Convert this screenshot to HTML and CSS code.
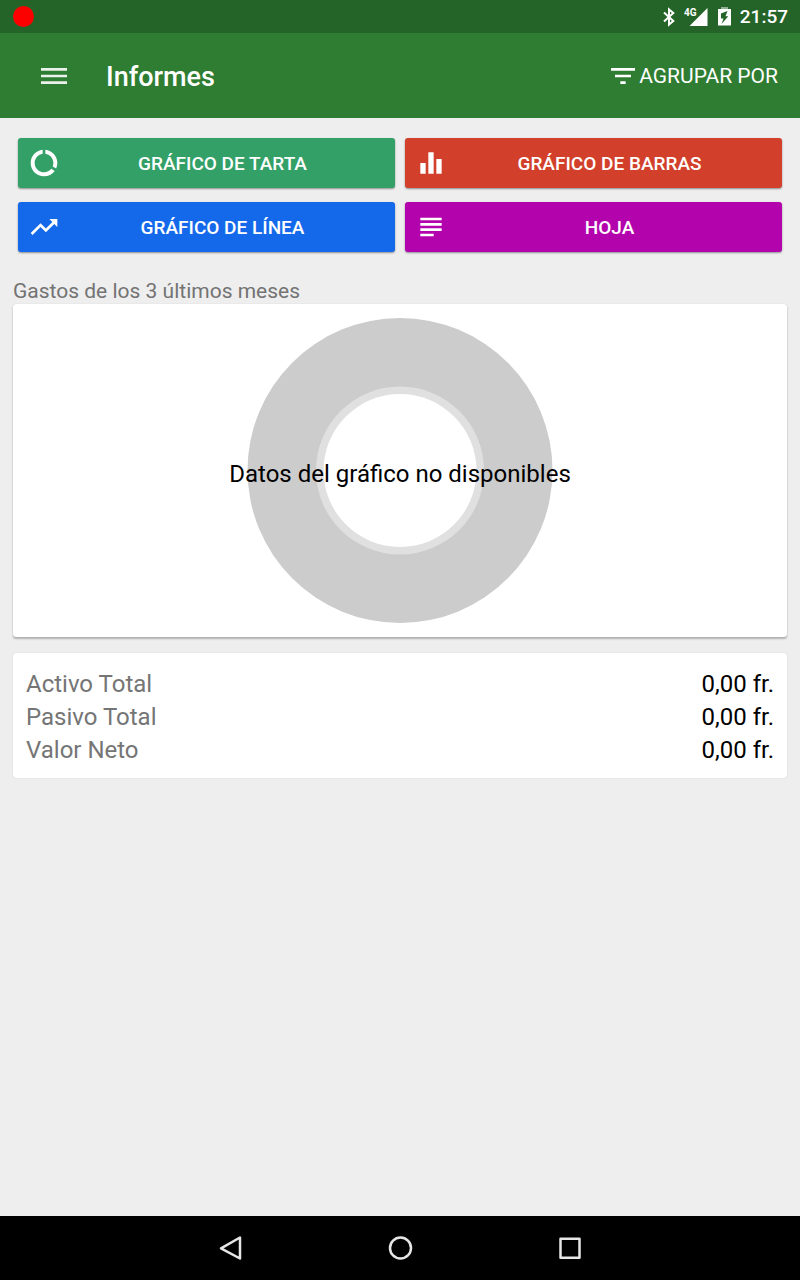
FILE: index.html
```html
<!DOCTYPE html>
<html lang="es">
<head>
<meta charset="utf-8">
<meta name="viewport" content="width=device-width, initial-scale=1">
<title>Informes</title>
<link rel="stylesheet" href="styles.css">
</head>
<body class="screen">
<div class="status-bar">
  <span class="record-dot"></span>
  <div class="status-icons">
    <svg width="12" height="20" viewBox="0 0 12 20" aria-hidden="true"><path d="M1 5.500L10.300 14L6 17.600V2.400L10.300 6L1 14.500" fill="none" stroke="#fff" stroke-width="2"/></svg>
    <svg width="25" height="20" viewBox="0 0 25 20" aria-hidden="true"><path d="M23.500 1V19H5.500Z" fill="#fff"/><path d="M0 0H12V10H0Z" fill="#256428"/><text class="network" x="0" y="9">4G</text></svg>
    <svg width="13" height="20" viewBox="0 0 13 20" aria-hidden="true"><path d="M3 0H10V2H3Z" fill="#90b292"/><path d="M0 2H13V18.500H0Z" fill="#fff"/><path d="M9.500 4L3 6.500V11.500H5.500L3.500 17L10.300 9.300H7.500Z" fill="#256428"/></svg>
  </div>
  <time class="clock">21:57</time>
</div>
<header class="toolbar">
  <button class="icon-button" type="button" aria-label="Menú">
    <svg width="26" height="18" viewBox="0 0 26 18"><path d="M0 2.400H26M0 9H26M0 15.600H26" stroke="#fff" stroke-opacity=".9" stroke-width="2.600"/></svg>
  </button>
  <h1 class="title">Informes</h1>
  <button class="group-button" type="button">
    <svg class="icon" viewBox="0 0 24 24" aria-hidden="true"><path d="M10 18h4v-2h-4v2zM3 6v2h18V6H3zm3 7h12v-2H6v2z"/></svg>
    <span>AGRUPAR POR</span>
  </button>
</header>
<main class="content">
  <div class="report-grid">
    <button class="report-button pie" type="button">
      <svg class="icon" viewBox="0 0 24 24" aria-hidden="true"><path d="M13 2.050v3.030c3.390.490 6 3.390 6 6.920 0 .900-.180 1.750-.480 2.540l2.600 1.530c.560-1.240.880-2.620.880-4.070 0-5.180-3.950-9.450-9-9.950zM12 19c-3.870 0-7-3.130-7-7 0-3.530 2.610-6.430 6-6.920V2.050c-5.060.500-9 4.760-9 9.950 0 5.520 4.470 10 9.990 10 3.310 0 6.240-1.610 8.060-4.090l-2.600-1.530C16.170 17.980 14.210 19 12 19z"/></svg>
      <span class="report-label">GRÁFICO DE TARTA</span>
    </button>
    <button class="report-button bars" type="button">
      <svg class="icon" viewBox="0 0 24 24" aria-hidden="true"><path d="M10 20h4V4h-4v16zm-6 0h4v-8H4v8zM16 9v11h4V9h-4z"/></svg>
      <span class="report-label">GRÁFICO DE BARRAS</span>
    </button>
    <button class="report-button line" type="button">
      <svg class="icon" viewBox="0 0 24 24" aria-hidden="true"><path d="M16 6l2.290 2.290-4.880 4.880-4-4L2 16.590 3.410 18l6-6 4 4 6.300-6.290L22 12V6z"/></svg>
      <span class="report-label">GRÁFICO DE LÍNEA</span>
    </button>
    <button class="report-button sheet" type="button">
      <svg class="icon" viewBox="0 0 24 24" aria-hidden="true"><path d="M14 17H4v2h10v-2zm6-8H4v2h16V9zM4 15h16v-2H4v2zM4 5v2h16V5H4z"/></svg>
      <span class="report-label">HOJA</span>
    </button>
  </div>
  <h2 class="section-title">Gastos de los 3 últimos meses</h2>
  <figure class="card chart-card">
    <svg class="donut" viewBox="0 0 306 306" aria-hidden="true">
      <circle cx="153" cy="152.500" r="152.500" fill="#ccc"/>
      <circle cx="153" cy="152.500" r="84" fill="#e0e0e0"/>
      <circle cx="153" cy="152.500" r="76.500" fill="#fff"/>
    </svg>
    <figcaption class="chart-note">Datos del gráfico no disponibles</figcaption>
  </figure>
  <dl class="card totals">
    <div class="total-row"><dt>Activo Total</dt><dd>0,00 fr.</dd></div>
    <div class="total-row"><dt>Pasivo Total</dt><dd>0,00 fr.</dd></div>
    <div class="total-row"><dt>Valor Neto</dt><dd>0,00 fr.</dd></div>
  </dl>
</main>
<nav class="nav-bar">
  <button class="nav-button" type="button" aria-label="Atrás"><svg width="26" height="26" viewBox="0 0 26 26"><path d="M23 2.500V23.500L4 13.300Z"/></svg></button>
  <button class="nav-button" type="button" aria-label="Inicio"><svg width="26" height="26" viewBox="0 0 26 26"><circle cx="13.500" cy="13" r="10.500"/></svg></button>
  <button class="nav-button" type="button" aria-label="Recientes"><svg width="26" height="26" viewBox="0 0 26 26"><rect x="3.500" y="3.700" width="19" height="19"/></svg></button>
</nav>
</body>
</html>
```

FILE: styles.css
```css
* { box-sizing: border-box; }

.screen {
  display: flex;
  flex-direction: column;
  min-height: 100vh;
  margin: 0;
  background: #eee;
  color: #000;
  font-family: Roboto, "Liberation Sans", sans-serif;
}

button {
  border: 0;
  padding: 0;
  background: none;
  color: #fff;
  font: inherit;
  cursor: pointer;
}

svg { display: block; flex: none; }

.icon { width: 32px; height: 32px; fill: #fff; }

.status-bar {
  display: flex;
  align-items: center;
  height: 33px;
  padding: 0 12px 0 13px;
  background: #256428;
  color: #fff;
}

.record-dot {
  width: 21px;
  height: 21px;
  border-radius: 50%;
  background: #f00;
}

.status-icons {
  display: flex;
  gap: 9px;
  margin-left: auto;
  margin-right: 9px;
}

.network {
  font-size: 10px;
  font-weight: 700;
  fill: #fff;
}

.clock { font-size: 19px; font-weight: 500; line-height: 33px; }

.toolbar {
  display: flex;
  align-items: center;
  height: 85px;
  padding: 0 22px 0 41px;
  background: #2e7d32;
  color: #fff;
}

.title {
  margin: 0 0 0 39px;
  padding-top: 2px;
  font-size: 27px;
  font-weight: 500;
  line-height: 32px;
}

.group-button {
  display: flex;
  align-items: center;
  margin-left: auto;
  font-size: 21px;
}

.content { flex: 1; padding: 20px 13px; }

.report-grid {
  display: grid;
  grid-template-columns: 1fr 1fr;
  gap: 14px 10px;
  padding: 0 5px;
}

.report-button {
  display: flex;
  align-items: center;
  height: 50px;
  padding: 0 10px;
  border-radius: 3px;
  box-shadow: 0 1px 2px rgba(0, 0, 0, 0.4);
  font-size: 19px;
  font-weight: 500;
}

.report-label { flex: 1; text-align: center; }

.pie { background: #33a067; }
.bars { background: #d23f2b; }
.line { background: #1469eb; }
.sheet { background: #b303ac; }

.section-title {
  margin: 26px 0 0;
  color: #737373;
  font-size: 21px;
  font-weight: 400;
  line-height: 26px;
}

.card {
  margin: 0;
  border-radius: 3px;
  background: #fff;
}

.chart-card {
  display: grid;
  place-items: center;
  padding: 14px 0 13px;
  box-shadow: 0 2px 2px rgba(0, 0, 0, 0.25), 0 0 1px rgba(0, 0, 0, 0.2);
}

.donut { grid-area: 1 / 1; width: 306px; }

.chart-note {
  grid-area: 1 / 1;
  padding-top: 6px;
  font-size: 24px;
  line-height: 28px;
}

.totals {
  margin-top: 16px;
  padding: 15px 13px 11px;
  box-shadow: 0 0 1px rgba(0, 0, 0, 0.25);
  font-size: 24px;
  line-height: 33px;
}

.total-row { display: flex; justify-content: space-between; }
.total-row dt { color: #757575; }
.total-row dd { margin: 0; }

.nav-bar {
  display: flex;
  justify-content: center;
  align-items: center;
  gap: 144px;
  height: 64px;
  background: #000;
}

.nav-button svg {
  fill: none;
  stroke: #e6e6e6;
  stroke-width: 2.5;
  stroke-linejoin: round;
}
```
